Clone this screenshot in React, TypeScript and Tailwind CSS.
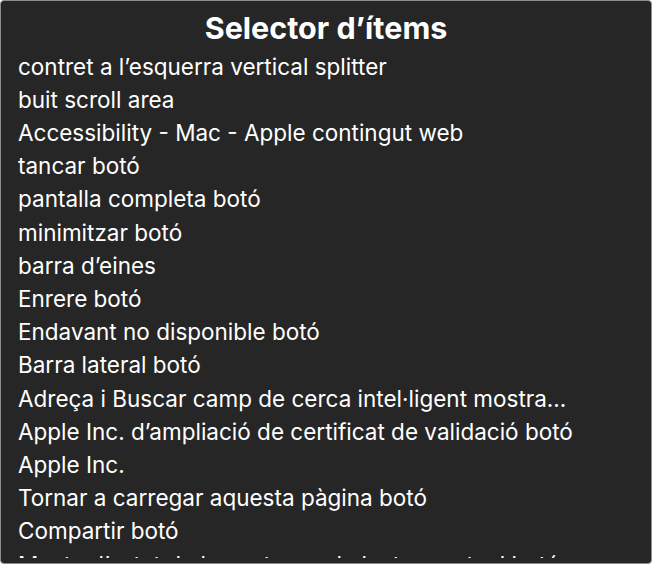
const items = [
  "contret a l’esquerra vertical splitter",
  "buit scroll area",
  "Accessibility - Mac - Apple contingut web",
  "tancar botó",
  "pantalla completa botó",
  "minimitzar botó",
  "barra d’eines",
  "Enrere botó",
  "Endavant no disponible botó",
  "Barra lateral botó",
  "Adreça i Buscar camp de cerca intel·ligent mostra...",
  "Apple Inc. d’ampliació de certificat de validació botó",
  "Apple Inc.",
  "Tornar a carregar aquesta pàgina botó",
  "Compartir botó",
  "Mostra l’estat de la pestanya de lectura actual botó",
];

export default function App() {
  return (
    <div className="h-[564px] w-[652px] bg-white">
      <div
        className="flex h-full w-full flex-col overflow-hidden rounded-[4px] border border-[#8c8c8c] bg-[#262626] text-white"
        style={{ fontFamily: "Inter, 'Noto Sans', sans-serif" }}
      >
        <h1 className="pt-[7px] text-center text-[30.5px] font-bold leading-[40px]">
          Selector d’ítems
        </h1>
        <ul className="mb-[5px] min-h-0 flex-1 overflow-hidden pl-[17px] pt-[1.5px]">
          {items.map((item) => (
            <li key={item} className="whitespace-nowrap text-[22.5px] leading-[33.2px]">
              {item}
            </li>
          ))}
        </ul>
      </div>
    </div>
  );
}
